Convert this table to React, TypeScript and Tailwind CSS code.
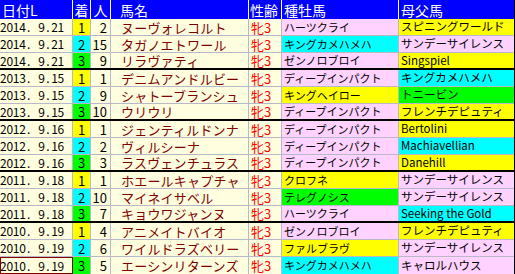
import React from 'react';

type Row = {
  date: string;
  rank: 1 | 2 | 3;
  pop: number;
  name: string;
  sire: string;
  sireBg: string;
  damSire: string;
  damBg: string;
};

const PINK = 'bg-[#ffd2ff]';
const YEL = 'bg-[#ffff00]';
const CYAN = 'bg-[#00ffff]';
const GRN = 'bg-[#00ff00]';

const rows: Row[] = [
  { date: '2014. 9.21', rank: 1, pop: 2, name: 'ヌーヴォレコルト', sire: 'ハーツクライ', sireBg: PINK, damSire: 'スピニングワールド', damBg: YEL },
  { date: '2014. 9.21', rank: 2, pop: 15, name: 'タガノエトワール', sire: 'キングカメハメハ', sireBg: CYAN, damSire: 'サンデーサイレンス', damBg: PINK },
  { date: '2014. 9.21', rank: 3, pop: 9, name: 'リラヴァティ', sire: 'ゼンノロブロイ', sireBg: PINK, damSire: 'Singspiel', damBg: YEL },
  { date: '2013. 9.15', rank: 1, pop: 1, name: 'デニムアンドルビー', sire: 'ディープインパクト', sireBg: PINK, damSire: 'キングカメハメハ', damBg: CYAN },
  { date: '2013. 9.15', rank: 2, pop: 9, name: 'シャトーブランシュ', sire: 'キングヘイロー', sireBg: YEL, damSire: 'トニービン', damBg: GRN },
  { date: '2013. 9.15', rank: 3, pop: 10, name: 'ウリウリ', sire: 'ディープインパクト', sireBg: PINK, damSire: 'フレンチデピュティ', damBg: YEL },
  { date: '2012. 9.16', rank: 1, pop: 1, name: 'ジェンティルドンナ', sire: 'ディープインパクト', sireBg: PINK, damSire: 'Bertolini', damBg: YEL },
  { date: '2012. 9.16', rank: 2, pop: 2, name: 'ヴィルシーナ', sire: 'ディープインパクト', sireBg: PINK, damSire: 'Machiavellian', damBg: CYAN },
  { date: '2012. 9.16', rank: 3, pop: 3, name: 'ラスヴェンチュラス', sire: 'ディープインパクト', sireBg: PINK, damSire: 'Danehill', damBg: YEL },
  { date: '2011. 9.18', rank: 1, pop: 1, name: 'ホエールキャプチャ', sire: 'クロフネ', sireBg: YEL, damSire: 'サンデーサイレンス', damBg: PINK },
  { date: '2011. 9.18', rank: 2, pop: 10, name: 'マイネイサベル', sire: 'テレグノシス', sireBg: GRN, damSire: 'サンデーサイレンス', damBg: PINK },
  { date: '2011. 9.18', rank: 3, pop: 7, name: 'キョウワジャンヌ', sire: 'ハーツクライ', sireBg: PINK, damSire: 'Seeking the Gold', damBg: CYAN },
  { date: '2010. 9.19', rank: 1, pop: 4, name: 'アニメイトバイオ', sire: 'ゼンノロブロイ', sireBg: PINK, damSire: 'フレンチデピュティ', damBg: YEL },
  { date: '2010. 9.19', rank: 2, pop: 6, name: 'ワイルドラズベリー', sire: 'ファルブラヴ', sireBg: YEL, damSire: 'サンデーサイレンス', damBg: PINK },
  { date: '2010. 9.19', rank: 3, pop: 5, name: 'エーシンリターンズ', sire: 'キングカメハメハ', sireBg: CYAN, damSire: 'キャロルハウス', damBg: PINK },
];

const rankBg = { 1: YEL, 2: CYAN, 3: GRN };

// fixed-pitch date, like the old monospaced sheet font
const DateText = ({ text }: { text: string }) => (
  <span className="flex">
    {text.split('').map((c, i) => (
      <span key={i} className="w-[6.4px] text-center inline-block">
        {c === ' ' ? '\u00a0' : c}
      </span>
    ))}
  </span>
);

export default function App() {
  return (
    <div className="w-[515px] h-[274px] bg-white overflow-hidden font-['Noto_Sans_CJK_JP',sans-serif] leading-none">
      <div className="w-[515px] border-r border-b border-black">
        {/* header */}
        <div className="flex h-[19px] bg-[#0000ff] text-white text-[14px] items-stretch">
          <div className="w-[73px] border-r border-white flex items-center pl-[2px]">日付L</div>
          <div className="w-[18px] border-r border-white flex items-center justify-center">着</div>
          <div className="w-[20px] border-r border-white flex items-center justify-center">人</div>
          <div className="w-[138px] border-r border-white flex items-center pl-[9px]">馬名</div>
          <div className="w-[33px] border-r border-white flex items-center pl-[1px]">性齢</div>
          <div className="w-[117px] border-r border-white flex items-center pl-[2px]">種牡馬</div>
          <div className="flex-1 flex items-center pl-[2px]">母父馬</div>
        </div>

        {rows.map((r, i) => {
          const groupEnd = i % 3 === 2 && i !== rows.length - 1;
          const last = i === rows.length - 1;
          return (
            <div
              key={i}
              className={`flex h-[17px] bg-[#ffffe0] ${groupEnd ? 'border-b-2 border-black' : last ? '' : 'border-b border-[#b8b8c8]'}`}
            >
              <div
                className={`w-[73px] border-r border-[#b8b8c8] flex items-center text-[12px] text-black ${last ? 'outline outline-1 -outline-offset-1 outline-[#800000]' : ''}`}
              >
                <DateText text={r.date} />
              </div>
              <div className={`w-[18px] border-r border-[#b8b8c8] flex items-center justify-center text-[13px] text-black ${rankBg[r.rank]}`}>
                {r.rank}
              </div>
              <div className="w-[20px] border-r border-[#b8b8c8] flex items-center justify-end pr-[3px] text-[13px] text-black">
                {r.pop}
              </div>
              <div className="w-[138px] border-r border-[#b8b8c8] flex items-center pl-[10px] text-[13px] tracking-[0.2px] text-[#800000] whitespace-nowrap">
                {r.name}
              </div>
              <div className="w-[33px] border-r border-[#b8b8c8] flex items-center pl-[2px] text-[13px] text-[#ff0000]">
                牝3
              </div>
              <div className={`w-[117px] border-r border-[#b8b8c8] flex items-center pl-[2px] text-[11px] text-black whitespace-nowrap ${r.sireBg}`}>
                {r.sire}
              </div>
              <div className={`flex-1 flex items-center pl-[2px] text-[11.5px] text-black whitespace-nowrap ${r.damBg}`}>
                {r.damSire}
              </div>
            </div>
          );
        })}
      </div>
    </div>
  );
}
